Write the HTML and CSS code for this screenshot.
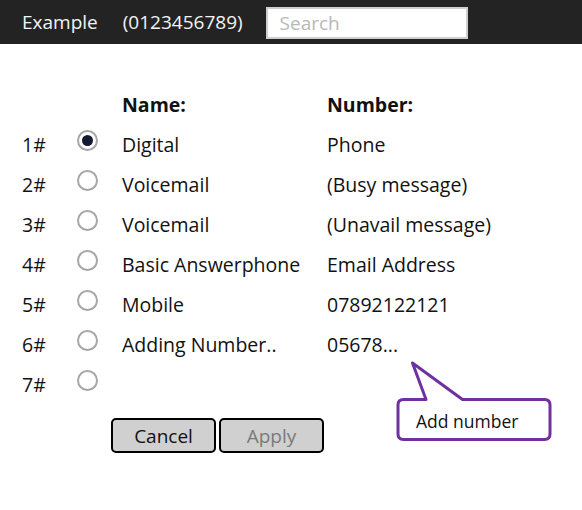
FILE: index.html
```html
<!DOCTYPE html>
<html>
<head>
<meta charset="utf-8">
<link rel="stylesheet" href="styles.css">
</head>
<body>
<header class="topbar">
  <span class="brand">Example</span>
  <span class="phone">(0123456789)</span>
  <input class="search" type="text" placeholder="Search">
</header>
<main class="content">
  <div class="grid">
    <div class="hdr idx"></div>
    <div class="hdr"></div>
    <div class="hdr bold">Name:</div>
    <div class="hdr bold">Number:</div>

    <div class="idx">1#</div><div class="rad"><span class="radio checked"></span></div><div>Digital</div><div>Phone</div>
    <div class="idx">2#</div><div class="rad"><span class="radio"></span></div><div>Voicemail</div><div>(Busy message)</div>
    <div class="idx">3#</div><div class="rad"><span class="radio"></span></div><div>Voicemail</div><div>(Unavail message)</div>
    <div class="idx">4#</div><div class="rad"><span class="radio"></span></div><div>Basic Answerphone</div><div>Email Address</div>
    <div class="idx">5#</div><div class="rad"><span class="radio"></span></div><div>Mobile</div><div>07892122121</div>
    <div class="idx">6#</div><div class="rad"><span class="radio"></span></div><div>Adding Number..</div><div>05678...</div>
    <div class="idx">7#</div><div class="rad"><span class="radio"></span></div><div></div><div></div>
  </div>
  <div class="actions">
    <button class="btn">Cancel</button>
    <button class="btn disabled">Apply</button>
  </div>
  <div class="callout">
    <svg width="160" height="82" viewBox="0 0 160 82">
      <path d="M27.5 38.5 L14 2 L64 38.5 L146 38.5 Q151.5 38.5 151.5 44 L151.5 73 Q151.5 78.5 146 78.5 L5 78.5 Q-0.5 78.5 -0.5 73 L-0.5 44 Q-0.5 38.5 5 38.5 Z" fill="#fff" stroke="#7030a0" stroke-width="3" stroke-linejoin="round" transform="translate(1.5 0)"/>
    </svg>
    <span class="callout-text">Add number</span>
  </div>
</main>
</body>
</html>
```
FILE: styles.css
```css
* { box-sizing: border-box; }
body {
  margin: 0;
  font-family: "Open Sans", "Liberation Sans", sans-serif;
  color: #111;
  background: #fff;
}
.topbar {
  height: 44px;
  background: #232323;
  display: flex;
  align-items: center;
  padding-left: 22px;
  color: #f4f4f4;
  font-size: 19px;
}
.brand { margin-right: 25px; }
.phone { margin-right: 23px; }
.search {
  width: 202px;
  height: 32px;
  border: 2px solid #cfcfcf;
  background: #fff;
  font-family: inherit;
  font-size: 19px;
  padding: 0 12px;
  margin-top: 1px;
}
.search::placeholder { color: #b8b8b8; }
.content {
  position: relative;
  padding: 40px 0 0 22px;
}
.grid {
  display: grid;
  grid-template-columns: 55px 45px 205px auto;
  grid-auto-rows: 40px;
  align-items: center;
  font-size: 19.5px;
}
.grid .hdr { height: 40px; display: flex; align-items: center; }
.bold { font-weight: 700; font-size: 19.5px; }
.rad { display: flex; align-items: center; }
.radio {
  display: inline-block;
  width: 21px;
  height: 21px;
  border: 2px solid #a6a6a6;
  border-radius: 50%;
  position: relative;
  margin-top: -8px;
}
.radio.checked::after {
  content: "";
  position: absolute;
  left: 3px; top: 3px;
  width: 11px; height: 11px;
  border-radius: 50%;
  background: #141a33;
}
.actions {
  display: flex;
  gap: 3px;
  padding: 14px 0 0 89px;
}
.btn {
  width: 105px;
  height: 35px;
  background: #d0d0d0;
  border: 2px solid #000;
  border-radius: 5px;
  font-family: inherit;
  font-size: 19px;
  color: #111;
  padding: 0;
}
.btn.disabled { color: #7a7a7a; }
.callout {
  position: absolute;
  left: 397px;
  top: 317px;
}
.callout svg { display: block; overflow: visible; }
.callout-text {
  position: absolute;
  left: 19px;
  top: 48px;
  font-size: 17.5px;
}
```
